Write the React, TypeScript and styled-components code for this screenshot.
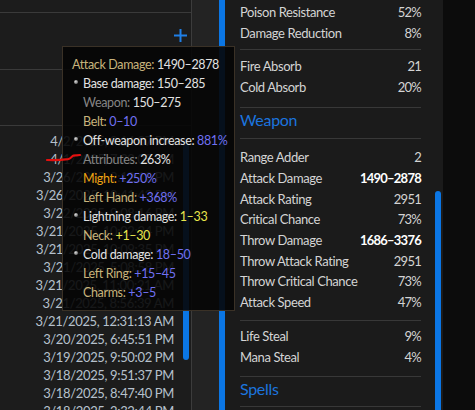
import React from 'react';
import styled, { createGlobalStyle } from 'styled-components';

type Tone = 'gold' | 'white' | 'grey' | 'blue' | 'orange' | 'yellow';

const toneColors: Record<Tone, string> = {
  gold: '#c8b47c',
  white: '#e2e2e2',
  grey: '#858585',
  blue: '#7070f2',
  orange: '#eea312',
  yellow: '#e8e64c'
};

const GlobalStyle = createGlobalStyle`
  html, body {
    margin: 0;
    padding: 0;
    background: #0c0c0c;
  }
  body {
    font-family: Lato, "Noto Sans", sans-serif;
    overflow: hidden;
  }
  * {
    box-sizing: border-box;
  }
`;

const Page = styled.div`
  position: relative;
  display: flex;
  width: 475px;
  height: 410px;
  overflow: hidden;
  background: #0c0c0c;
`;

/* ---------- left history panel ---------- */

const LeftPanel = styled.div`
  display: flex;
  flex-direction: column;
  width: 192px;
  flex-shrink: 0;
  background: #1c1c1c;
  border-right: 1px solid #3c3c3c;
`;

const PanelBlock = styled.div<{ $height: number }>`
  display: flex;
  justify-content: flex-end;
  align-items: flex-start;
  flex-shrink: 0;
  height: ${p => p.$height}px;
  border-bottom: 1px solid #3a3a3a;
`;

const AddButton = styled.button`
  display: flex;
  margin: 16px 4px 0 0;
  padding: 0;
  border: none;
  background: none;
  color: #1f7fe6;
  cursor: pointer;
`;

const DateArea = styled.div`
  display: flex;
  flex: 1;
  min-height: 0;
`;

const DateList = styled.div`
  flex: 1;
  padding-top: 6px;
  text-align: right;
`;

const DateRow = styled.div`
  height: 18px;
  line-height: 18px;
  font-size: 13px;
  letter-spacing: -0.35px;
  color: #b6c1cd;
  white-space: nowrap;
`;

const ScrollTrack = styled.div<{ $gap: number }>`
  display: flex;
  flex-direction: column;
  width: 6px;
  margin: 0 2px 0 ${p => p.$gap}px;
  flex-shrink: 0;
`;

const ScrollThumb = styled.div<{ $top: number; $height?: number; $radius: string }>`
  margin-top: ${p => p.$top}px;
  height: ${p => (p.$height ? `${p.$height}px` : 'auto')};
  flex: ${p => (p.$height ? '0 0 auto' : '1')};
  background: #0b76e4;
  border-radius: ${p => p.$radius};
`;

const Gutter = styled.div`
  width: 27px;
  flex-shrink: 0;
  background: #232323;
`;

const Rail = styled.div`
  width: 6px;
  flex-shrink: 0;
  background: #0b76e4;
`;

/* ---------- right stats panel ---------- */

const StatsPanel = styled.div`
  display: flex;
  width: 218px;
  flex-shrink: 0;
  background: #1b1b1b;
`;

const StatsContent = styled.div`
  flex: 1;
  min-width: 0;
  padding: 2px 0 0 15px;
`;

const StatGroup = styled.div<{ $pt: number; $pb: number }>`
  padding: ${p => p.$pt}px 0 ${p => p.$pb}px;
  border-bottom: 1px solid #383838;
`;

const StatRow = styled.div`
  display: flex;
  justify-content: space-between;
  height: 20.7px;
  line-height: 20.7px;
  font-size: 13px;
  letter-spacing: -0.4px;
  color: #d4d4d4;
  white-space: nowrap;
`;

const StatValue = styled.span<{ $bold?: boolean }>`
  letter-spacing: -0.75px;
  font-weight: ${p => (p.$bold ? 700 : 400)};
  color: ${p => (p.$bold ? '#ffffff' : '#d4d4d4')};
`;

const SectionTitle = styled.div<{ $height: number }>`
  height: ${p => p.$height}px;
  padding-top: 1px;
  line-height: 22px;
  font-size: 16px;
  letter-spacing: -0.3px;
  color: #1c74de;
  border-bottom: 1px solid #383838;
`;

const Rest = styled.div`
  flex: 1;
  background: #0c0c0c;
`;

/* ---------- tooltip ---------- */

const Tooltip = styled.div`
  position: absolute;
  left: 62px;
  top: 46px;
  width: 173px;
  padding: 8px 9px;
  background: rgba(6, 6, 6, 0.9);
  border: 1px solid #3a3126;
  font-size: 12.5px;
  letter-spacing: -0.35px;
  white-space: nowrap;
`;

const TipLine = styled.div`
  display: flex;
  align-items: center;
  height: 19px;
  line-height: 19px;
`;

const BulletSlot = styled.span`
  display: flex;
  align-items: center;
  width: 11px;
  height: 19px;
  flex-shrink: 0;
`;

const Bullet = styled.span`
  width: 4px;
  height: 4px;
  margin: -3px 0 0 2px;
  border-radius: 50%;
  background: radial-gradient(circle at 40% 35%, #d8d8d8 0%, #8a8a8a 55%, #4a4a4a 100%);
`;

const Seg = styled.span<{ $tone: Tone }>`
  color: ${p => toneColors[p.$tone]};
`;

const Scribble = styled.svg`
  position: absolute;
  left: 40px;
  top: 148px;
  overflow: visible;
  pointer-events: none;
`;

const dates = [
  '4/2/2025, 9:14:07 PM',
  '4/1/2025, 7:22:05 PM',
  '3/26/2025, 9:12:12 PM',
  '3/26/2025, 10:41:42 PM',
  '3/22/2025, 9:08:16 PM',
  '3/21/2025, 10:02:24 PM',
  '3/21/2025, 10:09:35 PM',
  '3/21/2025, 5:08:58 PM',
  '3/21/2025, 11:00:21 AM',
  '3/21/2025, 8:56:39 AM',
  '3/21/2025, 12:31:13 AM',
  '3/20/2025, 6:45:51 PM',
  '3/19/2025, 9:50:02 PM',
  '3/18/2025, 9:51:37 PM',
  '3/18/2025, 8:47:40 PM',
  '3/18/2025, 2:32:44 PM'
];

interface TipItem {
  kind: 'top' | 'bullet' | 'sub';
  label: string;
  labelTone: Tone;
  value: string;
  valueTone: Tone;
}

const tipItems: TipItem[] = [
  { kind: 'top', label: 'Attack Damage:', labelTone: 'gold', value: '1490–2878', valueTone: 'white' },
  { kind: 'bullet', label: 'Base damage:', labelTone: 'white', value: '150–285', valueTone: 'white' },
  { kind: 'sub', label: 'Weapon:', labelTone: 'grey', value: '150–275', valueTone: 'white' },
  { kind: 'sub', label: 'Belt:', labelTone: 'gold', value: '0–10', valueTone: 'blue' },
  { kind: 'bullet', label: 'Off-weapon increase:', labelTone: 'white', value: '881%', valueTone: 'blue' },
  { kind: 'sub', label: 'Attributes:', labelTone: 'grey', value: '263%', valueTone: 'white' },
  { kind: 'sub', label: 'Might:', labelTone: 'orange', value: '+250%', valueTone: 'blue' },
  { kind: 'sub', label: 'Left Hand:', labelTone: 'gold', value: '+368%', valueTone: 'blue' },
  { kind: 'bullet', label: 'Lightning damage:', labelTone: 'white', value: '1–33', valueTone: 'yellow' },
  { kind: 'sub', label: 'Neck:', labelTone: 'gold', value: '+1–30', valueTone: 'yellow' },
  { kind: 'bullet', label: 'Cold damage:', labelTone: 'white', value: '18–50', valueTone: 'blue' },
  { kind: 'sub', label: 'Left Ring:', labelTone: 'gold', value: '+15–45', valueTone: 'blue' },
  { kind: 'sub', label: 'Charms:', labelTone: 'gold', value: '+3–5', valueTone: 'blue' }
];

type Stat = { label: string; value: string; bold?: boolean };

type StatBlock =
  | { title: string; height: number }
  | { stats: Stat[]; pt: number; pb: number };

const statBlocks: StatBlock[] = [
  {
    pt: 0,
    pb: 6,
    stats: [
      { label: 'Poison Resistance', value: '52%' },
      { label: 'Damage Reduction', value: '8%' }
    ]
  },
  {
    pt: 6,
    pb: 9,
    stats: [
      { label: 'Fire Absorb', value: '21' },
      { label: 'Cold Absorb', value: '20%' }
    ]
  },
  { title: 'Weapon', height: 31 },
  {
    pt: 8.5,
    pb: 7,
    stats: [
      { label: 'Range Adder', value: '2' },
      { label: 'Attack Damage', value: '1490–2878', bold: true },
      { label: 'Attack Rating', value: '2951' },
      { label: 'Critical Chance', value: '73%' },
      { label: 'Throw Damage', value: '1686–3376', bold: true },
      { label: 'Throw Attack Rating', value: '2951' },
      { label: 'Throw Critical Chance', value: '73%' },
      { label: 'Attack Speed', value: '47%' }
    ]
  },
  {
    pt: 5.5,
    pb: 8.5,
    stats: [
      { label: 'Life Steal', value: '9%' },
      { label: 'Mana Steal', value: '4%' }
    ]
  },
  { title: 'Spells', height: 29.7 }
];

const App: React.FC = () => {
  return (
    <Page>
      <GlobalStyle />

      <LeftPanel>
        <PanelBlock $height={13} />
        <PanelBlock $height={57}>
          <AddButton aria-label="Add">
            <svg width="13" height="13" viewBox="0 0 13 13">
              <path d="M6.5 0v13M0 6.5h13" stroke="currentColor" strokeWidth="2" />
            </svg>
          </AddButton>
        </PanelBlock>
        <PanelBlock $height={56} />
        <DateArea>
          <DateList>
            {dates.map(d => (
              <DateRow key={d}>{d}</DateRow>
            ))}
          </DateList>
          <ScrollTrack $gap={9}>
            <ScrollThumb $top={14} $height={220} $radius="3px" />
          </ScrollTrack>
        </DateArea>
      </LeftPanel>

      <Gutter />
      <Rail />

      <StatsPanel>
        <StatsContent>
          {statBlocks.map((block, i) =>
            'title' in block ? (
              <SectionTitle key={i} $height={block.height}>
                {block.title}
              </SectionTitle>
            ) : (
              <StatGroup key={i} $pt={block.pt} $pb={block.pb}>
                {block.stats.map(s => (
                  <StatRow key={s.label}>
                    <span>{s.label}</span>
                    <StatValue $bold={s.bold}>{s.value}</StatValue>
                  </StatRow>
                ))}
              </StatGroup>
            )
          )}
        </StatsContent>
        <ScrollTrack $gap={14}>
          <ScrollThumb $top={191} $radius="3px 3px 0 0" />
        </ScrollTrack>
      </StatsPanel>

      <Rest />

      <Tooltip>
        {tipItems.map((item, i) => (
          <TipLine key={i}>
            {item.kind !== 'top' && <BulletSlot>{item.kind === 'bullet' && <Bullet />}</BulletSlot>}
            <Seg $tone={item.labelTone}>{item.label}</Seg>
            &nbsp;
            <Seg $tone={item.valueTone}>{item.value}</Seg>
          </TipLine>
        ))}
      </Tooltip>

      <Scribble width="42" height="16" viewBox="40 148 42 16">
        <path
          d="M47 160 C55 160.3 62 160 68 159.2 C70.5 158.8 71.5 156.5 73.5 155.6 L80 155"
          fill="none"
          stroke="#e3100f"
          strokeWidth="2.2"
          strokeLinecap="round"
        />
      </Scribble>
    </Page>
  );
};

export default App;
